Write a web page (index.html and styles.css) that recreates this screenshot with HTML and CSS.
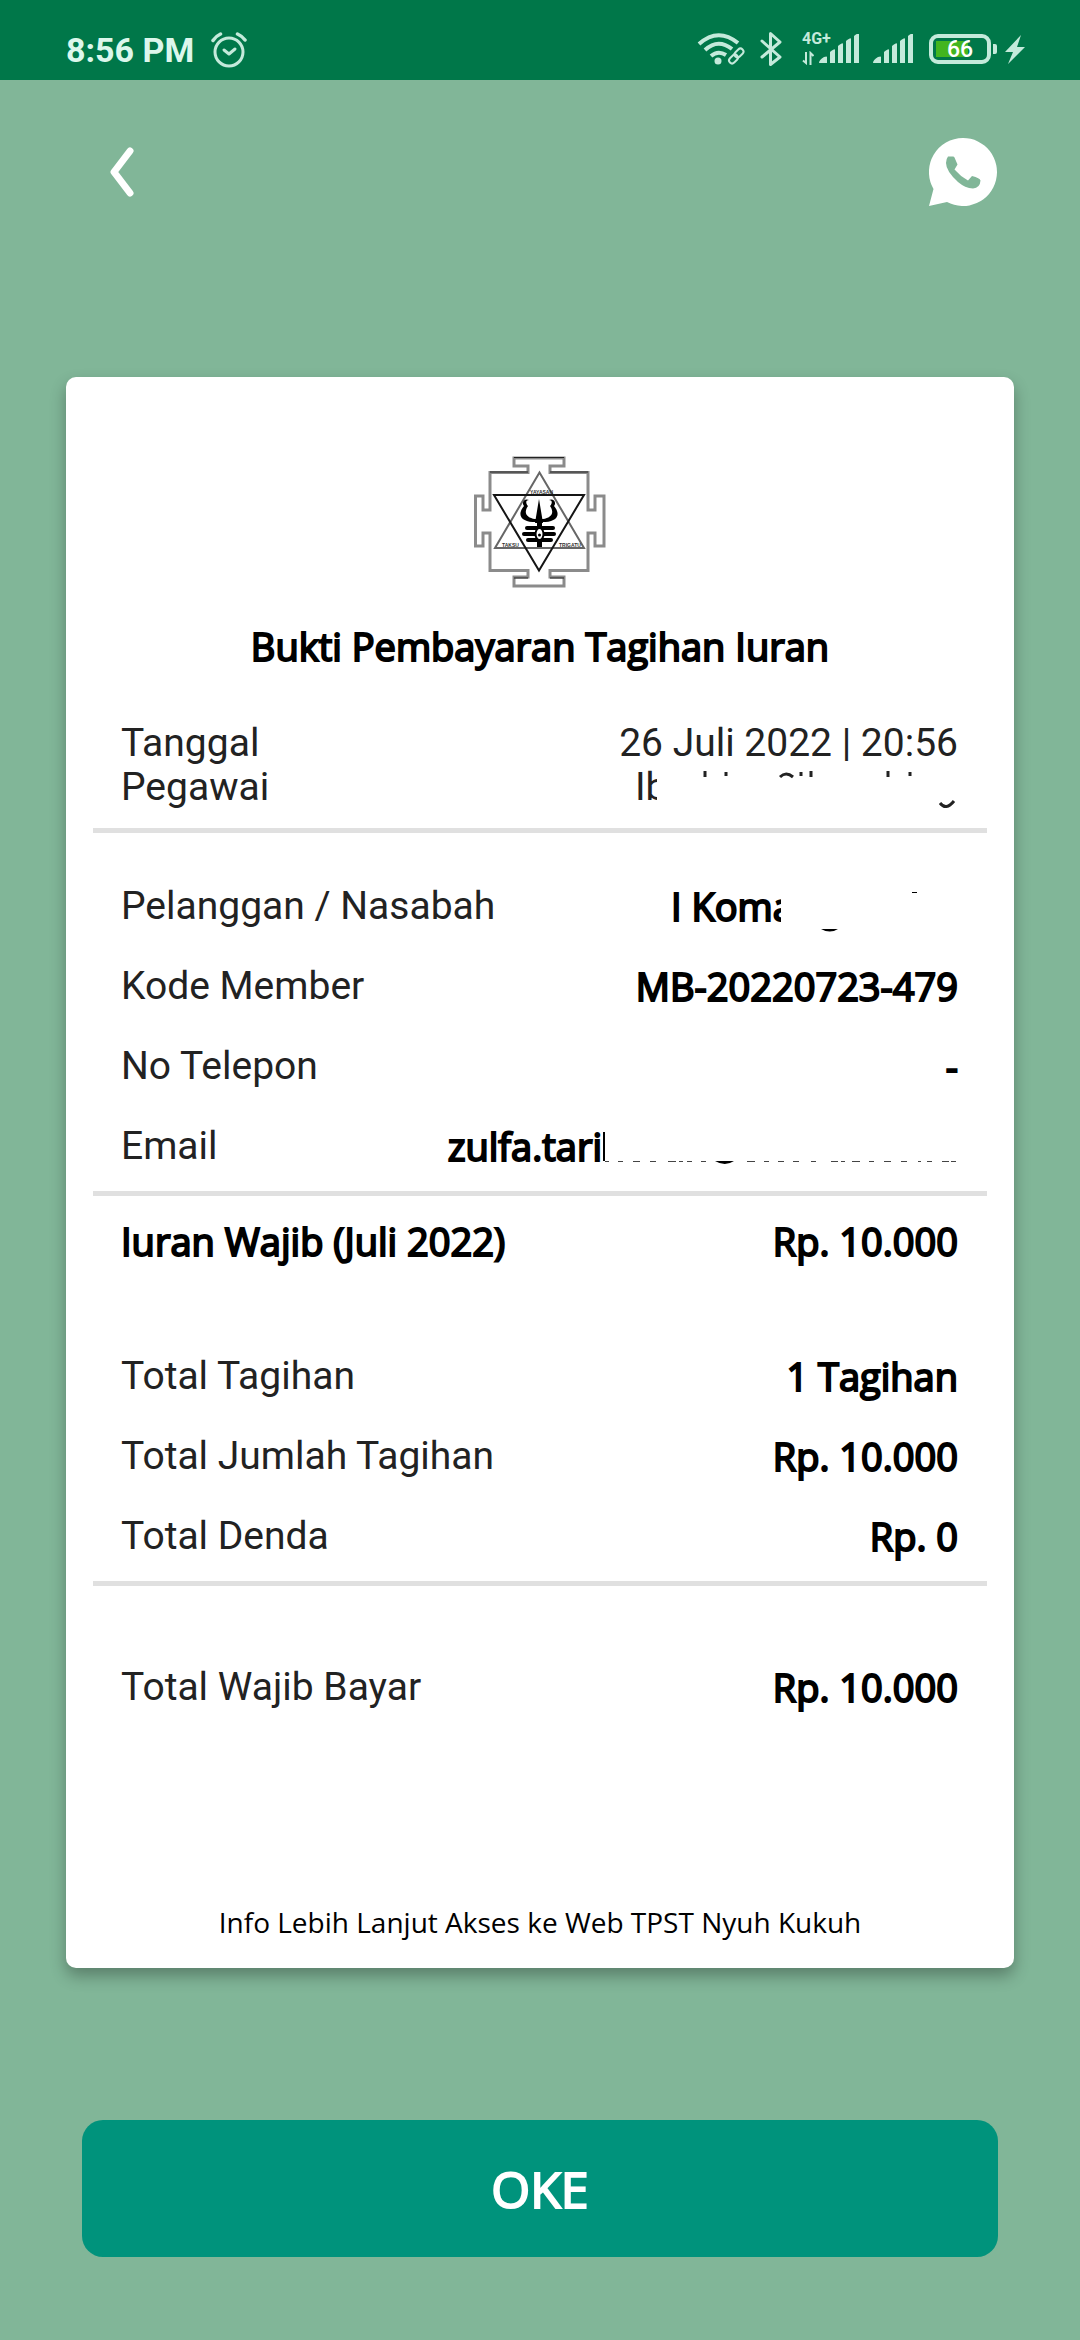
FILE: index.html
```html
<!DOCTYPE html>
<html lang="id">
<head>
<meta charset="utf-8">
<meta name="viewport" content="width=device-width, initial-scale=1">
<title>Bukti Pembayaran Tagihan Iuran</title>
<link rel="stylesheet" href="styles.css">
</head>
<body>
<div class="screen">
  <header class="status">
    <div class="status-left">
      <span class="clock">8:56 PM</span>
      <svg width="36" height="36" viewBox="0 0 36 36" fill="none" stroke="currentColor" stroke-width="3" stroke-linecap="round" stroke-linejoin="round"><circle cx="18" cy="20" r="14"/><path d="M13 18l5 4 6-5"/><path d="M2 8.500Q5 4 9.500 2M26.500 2Q31 4 34 8" stroke-width="3.500"/></svg>
    </div>
    <div class="status-right">
      <svg class="wifi" width="48" height="34" viewBox="0 0 48 34" fill="none" stroke="currentColor" stroke-width="4"><path d="M2 11Q21-6 41 10"/><path d="M8 17Q21 5 35 16"/><path d="M14 23Q21 17 29 22"/><circle cx="21" cy="28" r="3.500" fill="currentColor" stroke="none"/><g stroke="#007749" stroke-width="7"><path d="M34 31L45 19"/></g><g stroke-width="2"><rect x="-5" y="-3" width="10" height="6" rx="3" transform="translate(42 20) rotate(-45)"/><rect x="-5" y="-3" width="10" height="6" rx="3" transform="translate(36.500 26) rotate(-45)"/></g></svg>
      <svg class="bt" width="22" height="34" viewBox="0 0 22 34" fill="none" stroke="currentColor" stroke-width="3" stroke-linecap="round" stroke-linejoin="round"><path d="M2 9l18 16-9.500 7.500V1.500L20 10 2 25"/></svg>
      <div class="cell">
        <span class="net">4G+</span>
        <svg width="12" height="14" viewBox="0 0 12 14" fill="none" stroke="currentColor" stroke-width="2"><path d="M4 1v11L1 9.500M8.500 14V2l3 3"/></svg>
      </div>
      <svg class="sig1" width="42" height="30" viewBox="0 0 42 30" fill="currentColor"><path d="M0 29q0-3 5-6 3-1 3 0v6zM11 18q5-4 5-2v13h-5zM19 12q5-4 5-2v19h-5zM27 7q5-4 5-2v24h-5zM35 2q5-4 5-2v29h-5z"/></svg>
      <svg class="sig2" width="42" height="30" viewBox="0 0 42 30" fill="currentColor"><path d="M0 29q0-3 5-6 3-1 3 0v6zM11 18q5-4 5-2v13h-5zM19 12q5-4 5-2v19h-5zM27 7q5-4 5-2v24h-5zM35 2q5-4 5-2v29h-5z"/></svg>
      <div class="battery"><span class="level">66</span></div>
      <svg class="bolt" width="20" height="30" viewBox="0 0 20 30" fill="currentColor"><path d="M16 0L0 17h8L3 29 20 12h-8z"/></svg>
    </div>
  </header>

  <nav class="topbar">
    <button class="icon-btn" type="button" aria-label="Kembali"><svg width="28" height="50" viewBox="0 0 28 50" fill="none" stroke="#fff" stroke-width="7" stroke-linecap="round" stroke-linejoin="round"><path d="M23 4L7 25l16 21"/></svg></button>
    <button class="icon-btn" type="button" aria-label="WhatsApp"><svg width="68" height="68" viewBox="0 0 68 68"><path fill="#fff" d="M34 0a34 34 0 1 1-16 64L0 68l4.500-17A34 34 0 0 1 34 0z"/><path fill="#81b698" d="M19 18.500h5q1 0 1.500 1l3 7-3 5Q31 38 39 42.500l4-4.500q8 2 8.500 4.500Q51 50 44 50.500 36 50 29 44 17 33 17 25q0-4 2-6.500z"/></svg></button>
  </nav>

  <main class="card">
    <svg class="logo" width="132" height="132" viewBox="0 0 132 132" fill="none">
      <g stroke="#8b8b8b" stroke-width="3"><path d="M54 16.500V10H40V2h50v8H76v6.500h38V54h7V40h9v50h-9V77h-7v37.500H76v6.500h14v9H40v-9h14v-6.500H16V77H9v13H1.500V40H9v14h7V16.500z"/></g>
      <path d="M16 16h38M76 16h38M40 1.500h50M40 122h14M76 122h14" stroke="#222"/>
      <path d="M65.500 16.500L110 92H21z" stroke="#666" stroke-width="2"/>
      <path d="M20 39h90L65 114.500z" stroke="#151515" stroke-width="2"/>
      <g fill="#000"><path d="M65 43l4 24h-1v24h-5V67h-2z"/><path d="M55 44c-4-2-8 2-5 6-9 11 0 17 15 16 15 1 24-5 15-16 3-4-1-8-5-6 4 0 3 4 1 6 5 7 1 12-7 13h-8c-8-1-12-6-7-13-2-2-3-6 1-6z"/><rect x="51" y="70" width="30" height="4" rx="2"/><rect x="48" y="76" width="34" height="4" rx="2"/><rect x="52" y="82" width="27" height="4" rx="2"/></g>
      <ellipse cx="65.500" cy="78" rx="4" ry="6" fill="#fff" stroke="#000" stroke-width="2"/><circle cx="65.500" cy="79" r="1.500" fill="#000"/>
      <g class="logo-text"><text x="56" y="38">YAYASAN</text><text x="28" y="91">TAKSU</text><text x="85" y="91">TRIGATU</text></g>
    </svg>
    <h1 class="title">Bukti Pembayaran Tagihan Iuran</h1>

    <dl class="rows compact">
      <div class="row"><dt>Tanggal</dt><dd class="plain">26 Juli 2022 | 20:56</dd></div>
      <div class="row"><dt>Pegawai</dt><dd class="plain masked"><span class="cut cut-staff">Ib</span><svg width="301" height="44" viewBox="0 0 301 44" fill="none" stroke="currentColor" stroke-width="3"><path d="M48 6v6M69 7v4M144 7v4M154 6v6M231 6v6M253 7v4"/><path d="M123 12q6-6 13 0M283 38q6 8 14-2"/></svg></dd></div>
    </dl>
    <hr>
    <dl class="rows member">
      <div class="row"><dt>Pelanggan / Nasabah</dt><dd class="masked"><span class="cut cut-name">I Koma</span><svg width="177" height="80" viewBox="0 0 177 80" fill="currentColor"><path d="M40 63h17q-8 5-17 0zM131 26h5v1h-5z"/></svg></dd></div>
      <div class="row"><dt>Kode Member</dt><dd>MB-20220723-479</dd></div>
      <div class="row"><dt>No Telepon</dt><dd>-</dd></div>
      <div class="row"><dt>Email</dt><dd class="masked"><span>zulfa.tari</span><svg width="356" height="80" viewBox="0 0 356 80" fill="none" stroke="currentColor"><path d="M2 26v29" stroke-width="2"/><path d="M3 55.500h4M16 55.500h5M31 55.500h7M48 55.500h6M66 55.500h8M77 55.500h4M85 55.500h5M99 55.500h5M145 55.500h8M162 55.500h5M176 55.500h6M191 55.500h6M209 55.500h5M229 55.500h7M239 55.500h4M250 55.500h8M267 55.500h5M282 55.500h7M299 55.500h6M316 55.500h3M325 55.500h5M340 55.500h7M349 55.500h5" stroke="#444"/><path d="M113 55h19q-9 6-19 0z" fill="currentColor" stroke="none"/></svg></dd></div>
    </dl>
    <hr>
    <dl class="rows dues">
      <div class="row"><dt class="strong">Iuran Wajib (Juli 2022)</dt><dd>Rp. 10.000</dd></div>
    </dl>
    <dl class="rows totals">
      <div class="row"><dt>Total Tagihan</dt><dd>1 Tagihan</dd></div>
      <div class="row"><dt>Total Jumlah Tagihan</dt><dd>Rp. 10.000</dd></div>
      <div class="row"><dt>Total Denda</dt><dd>Rp. 0</dd></div>
    </dl>
    <hr>
    <dl class="rows grand">
      <div class="row"><dt>Total Wajib Bayar</dt><dd>Rp. 10.000</dd></div>
    </dl>
    <p class="note">Info Lebih Lanjut Akses ke Web TPST Nyuh Kukuh</p>
  </main>

  <button class="ok" type="button">OKE</button>
</div>
</body>
</html>
```
FILE: styles.css
```css
* { box-sizing: border-box; }
body { margin: 0; background: #81b698; font-family: Roboto, sans-serif; }
.screen { display: flex; flex-direction: column; min-height: 100vh; }
svg { display: block; flex: none; }

.status { display: flex; justify-content: space-between; height: 80px; padding: 32px 55px 0 66px; background: #007749; color: #c4eadb; }
.status-left { display: flex; gap: 17px; height: 36px; align-items: center; }
.clock { font-size: 34px; font-weight: 700; line-height: 36px; color: #dcf7ec; }
.status-right { display: flex; align-items: flex-start; height: 36px; }
.wifi { margin: 1px 15px 0 0; }
.bt { margin-right: 20px; }
.cell { display: flex; flex-direction: column; gap: 5px; width: 17px; }
.net { font-size: 16px; font-weight: 700; line-height: 14px; white-space: nowrap; }
.sig1, .sig2 { margin: 2px 12px 0 0; }
.sig2 { margin-right: 14px; }
.battery { position: relative; width: 62px; height: 30px; margin: 2px 14px 0 0; border: 4px solid currentColor; border-radius: 9px; background: linear-gradient(#43b51f, #43b51f) 3px 3px / 32px 16px no-repeat; text-align: center; }
.battery::after { content: ""; position: absolute; left: 60px; top: 6px; width: 4px; height: 10px; border-radius: 0 2px 2px 0; background: currentColor; }
.level { display: block; font-size: 23px; font-weight: 500; line-height: 24px; color: #fff; }
.bolt { margin-top: 3px; }

.topbar { display: flex; justify-content: space-between; align-items: center; height: 184px; padding: 0 83px 0 107px; }
.icon-btn { display: block; padding: 0; border: 0; background: none; }

.card { display: flex; flex-direction: column; margin: 113px 66px 0; padding: 79px 27px 26px; border-radius: 10px; background: #fff; box-shadow: 0 8px 16px rgba(0, 0, 0, .3); }
.logo { align-self: center; }
.logo-text { fill: #333; font: 700 5px "Liberation Sans", sans-serif; }
.title, dd, .strong, .ok { font-family: "Open Sans", sans-serif; font-size: 38px; font-weight: 400; -webkit-text-stroke: 2px currentColor; paint-order: stroke; }
.title { margin: 32px 0 49px; line-height: 52px; text-align: center; color: #000; }
.rows { margin: 0; padding: 0 29px 0 28px; color: #222; }
.row { display: flex; justify-content: space-between; align-items: center; height: 80px; font-size: 39px; white-space: nowrap; }
.compact .row { height: 44px; }
dd { margin: 0; color: #000; }
.strong { color: #000; }
dd.plain { font-family: Roboto, sans-serif; font-size: 39px; color: #222; -webkit-text-stroke: 0; }
.masked { display: flex; align-items: center; }
.cut { overflow: hidden; }
.cut-staff { width: 22px; }
.cut-name { width: 110px; }
hr { width: 100%; height: 5px; margin: 4px 0 0; border: 0; background: #e0e0e0; }
.compact { padding-bottom: 15px; }
.member { padding-top: 33px; padding-bottom: 1px; }
.dues { padding-top: 5px; }
.totals { padding-top: 55px; padding-bottom: 1px; }
.grand { padding-top: 61px; }
.note { margin: 175px 0 0; font: 400 28px/40px "Open Sans", sans-serif; text-align: center; color: #000; }

.ok { margin: 152px 82px 83px; height: 137px; border: 0; border-radius: 21px; background: #00937c; color: #fff; font-size: 50px; }
```
